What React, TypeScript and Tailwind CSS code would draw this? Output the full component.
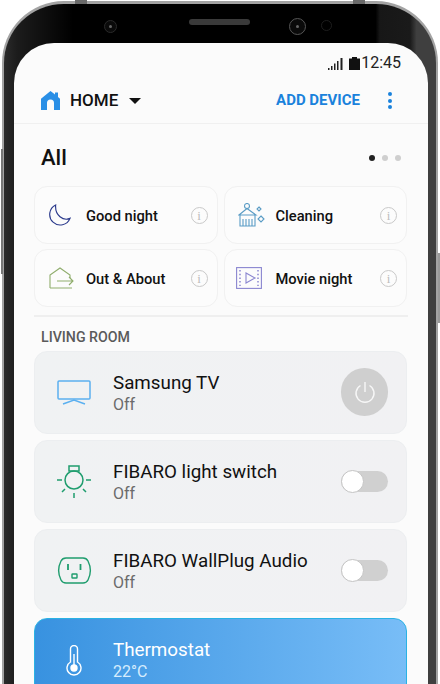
import type { ReactNode } from "react";

function InfoBadge() {
  return (
    <div className="flex h-[17px] w-[17px] items-center justify-center rounded-full border-[1.5px] border-[#c9c9c9] font-['Liberation_Serif',serif] text-[13px] leading-none text-[#bdbdbd]">
      i
    </div>
  );
}

function SceneCard({ icon, label }: { icon: ReactNode; label: string }) {
  return (
    <div className="flex h-[58px] items-center rounded-[13px] border border-[#f1f1f1] bg-[#fcfcfc] pr-[9px]">
      <div className="flex w-[51px] shrink-0 items-center justify-center pr-[2px]">{icon}</div>
      <span className="flex-1 pt-[2px] text-[14.7px] font-medium text-[#111]">{label}</span>
      <InfoBadge />
    </div>
  );
}

function DeviceCard({ icon, name, status, control }: { icon: ReactNode; name: string; status: string; control: ReactNode }) {
  return (
    <div className="flex h-[83px] items-center rounded-[13px] border border-[#eceef0] bg-[linear-gradient(90deg,#f0f2f3,#f1f1f3)] pr-[18px]">
      <div className="flex w-[78px] shrink-0 items-center justify-center">{icon}</div>
      <div className="flex-1 pt-[1px]">
        <div className="text-[18.8px] leading-[24px] text-[#111]">{name}</div>
        <div className="text-[16px] leading-[20px] text-[#6b6b6b]">{status}</div>
      </div>
      {control}
    </div>
  );
}

function Toggle() {
  return (
    <div className="relative h-[21px] w-[47px] rounded-full bg-[#d0d0d0]">
      <div className="absolute -top-[1px] left-0 h-[23px] w-[23px] rounded-full border border-[#c4c4c4] bg-white" />
    </div>
  );
}

function PowerButton() {
  return (
    <div className="flex h-[48px] w-[47px] items-center justify-center rounded-full bg-[#cfcfcf]">
      <svg width="24" height="24" viewBox="0 0 24 24" fill="none" stroke="#f7f7f7" strokeWidth="1.4">
        <path d="M7.5 5.5a9 9 0 1 0 9 0" />
        <path d="M12 2v10" />
      </svg>
    </div>
  );
}

function Camera({ size, ring }: { size: string; ring: string }) {
  return (
    <div className={`flex items-center justify-center rounded-full border bg-[#0a0a0a] ${size} ${ring}`}>
      <div className="h-[3px] w-[3px] rounded-full bg-[#666]" />
    </div>
  );
}

export default function App() {
  return (
    <div className="relative h-[684px] w-[440px] overflow-hidden bg-white font-['Roboto',sans-serif]">
      {/* frame */}
      <div className="mx-[2px] mt-[1px] h-[700px] rounded-t-[62px] border-x-[2px] border-t-[3px] border-[#a3a3a3] bg-[linear-gradient(90deg,#2b2b2b_0%,#1c1c1c_3%,#000_16%,#000_86%,#171717_87%,#1a1a1a_94%,#3f3f3f_95.5%,#3f3f3f_100%)] pr-[8px] pl-[10px]">
        {/* sensors row */}
        <div className="flex h-[39px] items-start">
          <div className="mt-[16px] ml-[90px]">
            <Camera size="h-[13px] w-[13px]" ring="border-[#2a2a2a]" />
          </div>
          <div className="mt-[15px] ml-[72px] h-[6px] w-[61px] rounded-full bg-[#3a3a3a]" />
          <div className="mt-[14px] ml-[39px]">
            <Camera size="h-[17px] w-[17px]" ring="border-[#555]" />
          </div>
          <div className="mt-[16px] ml-[15px] h-[11px] w-[11px] rounded-full border border-[#1d1d1d]" />
        </div>

        {/* screen */}
        <div className="h-[660px] rounded-t-[40px] bg-[#fbfbfb]">
          {/* status bar */}
          <div className="flex h-[30px] items-end justify-end gap-[1px] pr-[27px]">
            <svg width="16" height="12" viewBox="0 0 16 12" className="mr-[4px] mb-[3px]" fill="#222">
              <rect x="0" y="10" width="1.5" height="2" />
              <rect x="3" y="8" width="1.5" height="4" />
              <rect x="6" y="5.5" width="1.5" height="6.5" />
              <rect x="9" y="3" width="1.5" height="9" />
              <rect x="12.5" y="0" width="2" height="12" />
            </svg>
            <svg width="11" height="13" viewBox="0 0 11 13" className="mb-[3px]" fill="#111">
              <path d="M3 0h5v1.5h3V13H0V1.5h3z" />
            </svg>
            <span className="text-[16px] leading-[20px] text-[#222]">12:45</span>
          </div>

          {/* top bar */}
          <div className="flex h-[51px] items-center border-b-[1.5px] border-[#f0f0f0] pt-[5px] pr-[36px] pl-[27px]">
            <svg width="19" height="19" viewBox="0 0 19 19" fill="#2a8fe6">
              <path d="M9.5 0 14 3.6V1.5h3v4.5l2 1.7V19h-6v-7a3.5 3.5 0 0 0-7 0v7H0V7.7z" />
            </svg>
            <span className="ml-[10px] text-[17px] font-medium text-[#111]">HOME</span>
            <svg width="12" height="6" viewBox="0 0 12 6" className="ml-[11px]" fill="#111">
              <path d="M0 0h12L6 6z" />
            </svg>
            <span className="ml-auto text-[15px] font-bold text-[#1a82dc]">ADD DEVICE</span>
            <div className="ml-[28px] flex flex-col gap-[2.5px]">
              <div className="h-[4px] w-[4px] rounded-full bg-[#1a82dc]" />
              <div className="h-[4px] w-[4px] rounded-full bg-[#1a82dc]" />
              <div className="h-[4px] w-[4px] rounded-full bg-[#1a82dc]" />
            </div>
          </div>

          <div className="px-[20px]">
            {/* heading */}
            <div className="flex h-[62px] items-center justify-between pt-[5px] pr-[7px] pl-[7px]">
              <span className="text-[22px] font-medium text-[#111]">All</span>
              <div className="flex items-center gap-[7px]">
                <div className="h-[6px] w-[6px] rounded-full bg-[#222]" />
                <div className="h-[6px] w-[6px] rounded-full bg-[#cfcfcf]" />
                <div className="h-[6px] w-[6px] rounded-full bg-[#cfcfcf]" />
              </div>
            </div>

            {/* scenes */}
            <div className="grid grid-cols-2 gap-x-[6px] gap-y-[5px] pr-[1px]">
              <SceneCard
                label="Good night"
                icon={
                  <svg width="23" height="23" viewBox="0 0 24 24" fill="none" stroke="#2b3a8c" strokeWidth="1.2">
                    <path d="M8 1a11 11 0 1 0 15 14c-7 3-16-3-15-14z" />
                  </svg>
                }
              />
              <SceneCard
                label="Cleaning"
                icon={
                  <svg width="27" height="24" viewBox="0 0 27 24" className="ml-[5px]" fill="none" stroke="#5a9cc5" strokeWidth="1.1">
                    <circle cx="9" cy="3" r="2.5" />
                    <path d="M9 5.5 1 12h17zM2 12v11h15V12M5 16v7M8 16v7M11 16v7M14 16v7" />
                    <path d="M21 4l2 2-2 2-2-2zM23 13l3 3-3 3-3-3z" />
                  </svg>
                }
              />
              <SceneCard
                label="Out & About"
                icon={
                  <svg width="25" height="22" viewBox="0 0 25 22" className="ml-[3px]" fill="none" stroke="#8fad6c" strokeWidth="1.1">
                    <path d="M1 21V8l10-7 10 7v3" />
                    <path d="M1 21h22M8 14h16M20 10l4 4-4 4" />
                  </svg>
                }
              />
              <SceneCard
                label="Movie night"
                icon={
                  <svg width="26" height="22" viewBox="0 0 26 22" fill="none" stroke="#8a86d0" strokeWidth="1.1">
                    <rect x="0.6" y="0.6" width="24.8" height="20.8" />
                    <path d="M10 6v10l9-5z" />
                    <path d="M4 3v16M22 3v16" strokeDasharray="1.5 2.2" strokeWidth="1.5" />
                  </svg>
                }
              />
            </div>

            <div className="mt-[8px] h-[1.5px] bg-[#efefef]" />

            <div className="flex h-[34px] items-center pt-[8px] pl-[7px] text-[14.2px] font-medium text-[#5a5a5a]">LIVING ROOM</div>

            {/* devices */}
            <div className="flex flex-col gap-[6px] pr-[1px]">
              <DeviceCard
                name="Samsung TV"
                status="Off"
                control={<PowerButton />}
                icon={
                  <svg width="34" height="25" viewBox="0 0 34 25" fill="none" stroke="#5bb0f0" strokeWidth="1.5">
                    <rect x="1" y="1" width="32" height="18" rx="1" />
                    <path d="M6 24l11-4 11 4" />
                  </svg>
                }
              />
              <DeviceCard
                name="FIBARO light switch"
                status="Off"
                control={<Toggle />}
                icon={
                  <svg width="36" height="33" viewBox="0 0 36 33" fill="none" stroke="#1f9d6e" strokeWidth="1.5">
                    <rect x="13" y="1" width="10" height="5" />
                    <circle cx="18" cy="15" r="9" />
                    <path d="M1 15h5M30 15h5M6 27l3-3M30 27l-3-3M18 28v5" />
                  </svg>
                }
              />
              <DeviceCard
                name="FIBARO WallPlug Audio"
                status="Off"
                control={<Toggle />}
                icon={
                  <svg width="35" height="27" viewBox="0 0 35 27" fill="none" stroke="#1f9d6e" strokeWidth="1.4">
                    <path d="M9 1h17c2 0 4 1 5 3 3 6 3 13 0 19-1 2-3 3-5 3H9c-2 0-4-1-5-3-3-6-3-13 0-19 1-2 3-3 5-3z" />
                    <path d="M11 7v6M23.500 7v6" strokeWidth="1.800" />
                    <rect x="15" y="17" width="5" height="4" rx="0.5" />
                  </svg>
                }
              />
              <div className="flex h-[83px] items-start rounded-[13px] border border-[#2ab2e4] bg-[linear-gradient(90deg,#3892e0,#78bdf7)]">
                <div className="flex w-[78px] shrink-0 justify-center pt-[26px]">
                  <svg width="16" height="31" viewBox="0 0 16 31" fill="none" stroke="#fff" strokeWidth="1.400">
                    <path d="M4.500 17V4a3.500 3.500 0 0 1 7 0v13a7 7 0 1 1-7 0z" />
                    <circle cx="8" cy="23" r="3" fill="#fff" />
                    <path d="M8 9v12" />
                  </svg>
                </div>
                <div className="pt-[19px]">
                  <div className="text-[18.8px] leading-[24px] text-white">Thermostat</div>
                  <div className="text-[16px] leading-[20px] text-[#d6ecfd]">22°C</div>
                </div>
              </div>
            </div>
          </div>
        </div>
      </div>

      {/* metal tabs and side keys on the frame */}
      <div className="absolute top-0 left-[75px] h-[4px] w-[12px] bg-[#6a6a6a]" />
      <div className="absolute top-0 left-[353px] h-[4px] w-[12px] bg-[#6a6a6a]" />
      <div className="absolute top-[149px] left-[1px] h-[125px] w-[2px] bg-[#777]" />
      <div className="absolute top-[253px] right-0 h-[70px] w-[2px] bg-[#999]" />
    </div>
  );
}
